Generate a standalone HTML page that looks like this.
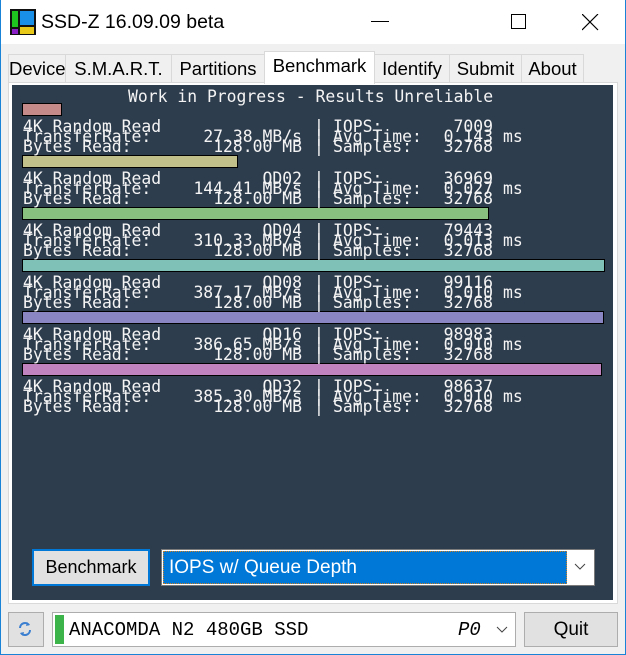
<!DOCTYPE html>
<html><head><meta charset="utf-8"><style>
*{margin:0;padding:0;box-sizing:border-box}
body{width:626px;height:655px;overflow:hidden;background:#f0f0f0;position:relative;font-family:"Liberation Sans","DejaVu Sans",sans-serif}
.a{position:absolute}
.win{left:0;top:0;width:626px;height:655px;border:1px solid #1883d7;border-top:none}
.title{left:1px;top:0;width:624px;height:44px;background:#fff}
.tab{position:absolute;top:54px;height:28px;background:#f0f0f0;border:1px solid #d9d9d9;border-bottom:none;font-size:18.5px;color:#000;line-height:27px;text-align:center}
.sel{top:51px;height:33px;background:#fff;line-height:28px;z-index:2}
.page{left:8px;top:82px;width:610px;height:522px;background:#fff;border:1px solid #d9d9d9}
.dark{left:12px;top:85px;width:601px;height:515px;background:#2e3d4e}
.m{font-family:"DejaVu Sans Mono","Liberation Mono",monospace;font-size:16.4px;color:#f4f4f4;line-height:12px;white-space:pre;position:absolute}
.bar{position:absolute;left:22px;height:13px;border:1px solid #000}
.r{text-align:right}
</style></head><body>
<div class="a title"></div>
<div class="a win"></div>
<svg class="a" style="left:10px;top:9px" width="26" height="26"><rect x="0" y="0" width="26" height="26" fill="#111"/><rect x="2" y="2" width="6" height="16" fill="#1ec51e"/><rect x="10" y="2" width="14" height="14" fill="#1a8fe8"/><rect x="2" y="20" width="6" height="5" fill="#8a1fc8"/><rect x="10" y="18" width="14" height="7" fill="#e8c818"/></svg>
<div class="a" style="left:41px;top:11px;font-size:19.5px">SSD-Z 16.09.09 beta</div>
<div class="a" style="left:371px;top:21px;width:18px;height:1px;background:#000"></div>
<div class="a" style="left:511px;top:14px;width:15px;height:15px;border:1px solid #000"></div>
<svg class="a" style="left:582px;top:14px" width="17" height="17"><path d="M0 0L16 16M16 0L0 16" stroke="#000" stroke-width="1.2"/></svg>
<div class="tab" style="left:8px;width:58px">Device</div>
<div class="tab" style="left:65px;width:107px">S.M.A.R.T.</div>
<div class="tab" style="left:171px;width:94px">Partitions</div>
<div class="tab sel" style="left:264px;width:111px">Benchmark</div>
<div class="tab" style="left:374px;width:76px">Identify</div>
<div class="tab" style="left:449px;width:73px">Submit</div>
<div class="tab" style="left:521px;width:63px">About</div>
<div class="a page"></div>
<div class="a dark"></div>
<div class="m" style="left:128px;top:91px">Work in Progress - Results Unreliable</div>
<div class="bar" style="top:103px;width:40px;background:#c48a8a"></div>
<div class="bar" style="top:155px;width:216px;background:#c2c08a"></div>
<div class="bar" style="top:207px;width:467px;background:#88c07f"></div>
<div class="bar" style="top:259px;width:583px;background:#7fc0b7"></div>
<div class="bar" style="top:311px;width:582px;background:#8a86c4"></div>
<div class="bar" style="top:363px;width:580px;background:#c083c0"></div>
<div id="blocks"></div>
<script>
var d=[["",'27.38','7009','0.143'],["QD02",'144.41','36969','0.027'],["QD04",'310.33','79443','0.013'],["QD08",'387.17','99116','0.010'],["QD16",'386.65','98983','0.010'],["QD32",'385.30','98637','0.010']];
var h='';
d.forEach(function(b,i){var t=121+i*52;
function L(x,y,s,r){h+='<div class="m'+(r?' r':'')+'" style="'+(r?'right:'+(626-x)+'px':'left:'+x+'px')+';top:'+(t+y)+'px">'+s+'</div>';}
L(23,0,'4K Random Read');L(23,10,'TransferRate:');L(23,20,'Bytes Read:');
L(302,0,b[0],1);L(302,10,b[1]+' MB/s',1);L(302,20,'128.00 MB',1);
L(314,0,'|');L(314,10,'|');L(314,20,'|');
L(333,0,'IOPS:');L(333,10,'Avg Time:');L(333,20,'Samples:');
L(493,0,b[2],1);L(493,10,b[3],1);L(493,20,'32768',1);L(503,10,'ms');});
document.getElementById('blocks').innerHTML=h;
</script>
<div class="a" style="left:32px;top:549px;width:118px;height:37px;background:#e1e1e1;border:2px solid #0078d7;font-size:18px;line-height:33px;text-align:center">Benchmark</div>
<div class="a" style="left:161px;top:549px;width:434px;height:37px;background:#fff;border:1px solid #7a7a7a"></div>
<div class="a" style="left:163px;top:551px;width:404px;height:33px;background:#0078d7;border:1px dotted #d08020;color:#fff;font-size:19px;line-height:31px;padding-left:5px">IOPS w/ Queue Depth</div>
<svg class="a" style="left:574px;top:563px" width="12" height="8"><path d="M1 1L6 6L11 1" stroke="#444" fill="none"/></svg>
<div class="a" style="left:8px;top:612px;width:36px;height:35px;background:#e1e1e1;border:1px solid #adadad"></div>
<svg class="a" style="left:18px;top:621px" width="14" height="16"><path d="M2 7A5 5 0 0 1 11 4M12 9A5 5 0 0 1 3 12" stroke="#3a7fd0" stroke-width="2" fill="none"/><path d="M9 1L12 4L8 5Z M5 15L2 12L6 11Z" fill="#3a7fd0"/></svg>
<div class="a" style="left:52px;top:612px;width:464px;height:35px;background:#fff;border:1px solid #adadad"></div>
<div class="a" style="left:55px;top:615px;width:9px;height:29px;background:#3cb44a"></div>
<div class="a" style="left:69px;top:619px;font-family:'Liberation Mono',monospace;font-size:19px">ANACOMDA N2 480GB SSD</div>
<div class="a" style="left:458px;top:619px;font-family:'Liberation Mono',monospace;font-size:19px;font-style:italic">P0</div>
<svg class="a" style="left:496px;top:626px" width="12" height="8"><path d="M1 1L6 6L11 1" stroke="#444" fill="none"/></svg>
<div class="a" style="left:524px;top:612px;width:94px;height:35px;background:#e1e1e1;border:1px solid #adadad;font-size:19px;line-height:33px;text-align:center">Quit</div>
</body></html>
